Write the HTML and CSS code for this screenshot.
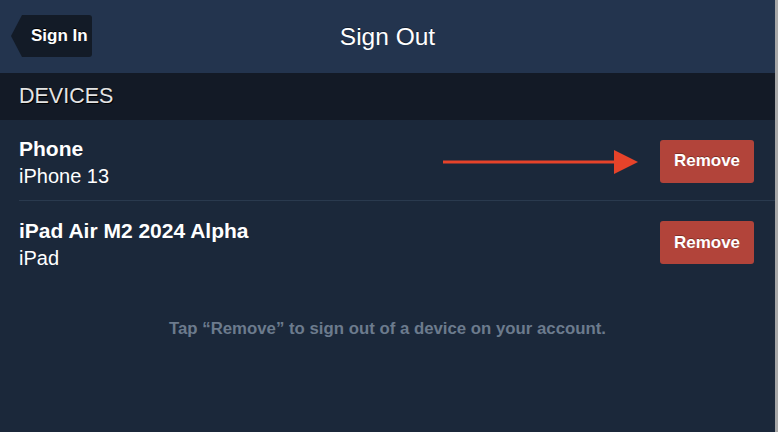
FILE: index.html
```html
<!DOCTYPE html>
<html lang="en">
<head>
    <meta charset="UTF-8">
    <meta name="viewport" content="width=device-width, initial-scale=1.0">
    <title>Sign Out</title>
    <link rel="stylesheet" href="styles.css">
</head>
<body>
    <div class="screen">
        <header class="nav-bar">
            <button class="back-btn">Sign In</button>
            <h1>Sign Out</h1>
        </header>

        <div class="section-header">DEVICES</div>

        <ul class="device-list">
            <li class="device-row">
                <div class="device-info">
                    <div class="device-name">Phone</div>
                    <div class="device-model">iPhone 13</div>
                </div>
                <button class="remove-btn">Remove</button>
                <!-- annotation arrow -->
                <svg class="callout-arrow" width="196" height="26" viewBox="0 0 196 26">
                    <line x1="0" y1="13" x2="174" y2="13" stroke="#e6432a" stroke-width="3"/>
                    <polygon points="171,1 195,13 171,25" fill="#e6432a"/>
                </svg>
            </li>
            <li class="device-row">
                <div class="device-info">
                    <div class="device-name">iPad Air M2 2024 Alpha</div>
                    <div class="device-model">iPad</div>
                </div>
                <button class="remove-btn">Remove</button>
            </li>
        </ul>

        <p class="hint">Tap “Remove” to sign out of a device on your account.</p>
    </div>
</body>
</html>
```

FILE: styles.css
```css
* {
    box-sizing: border-box;
}

body {
    margin: 0;
    font-family: "Liberation Sans", Arial, sans-serif;
    background: #1b283a;
    color: white;
    height: 432px;
    overflow: hidden;
}

.screen {
    width: 778px;
    height: 432px;
    border-right: 3px solid #a8a8a8;
    background: #1b283a;
}

/* Navigation bar */
.nav-bar {
    position: relative;
    height: 73px;
    background: #23344e;
    display: flex;
    align-items: center;
    justify-content: center;
}

.nav-bar h1 {
    margin: 0;
    font-size: 24.5px;
    font-weight: normal;
    text-shadow: 0 -1px 0 rgba(0, 0, 0, 0.4);
}

.back-btn {
    position: absolute;
    left: 22px;
    top: 15px;
    height: 42px;
    width: 70px;
    padding: 0 0 0 9px;
    border: none;
    border-radius: 0 3px 3px 0;
    background: #131b27;
    color: white;
    font-family: inherit;
    font-size: 17px;
    font-weight: bold;
    text-shadow: 0 -1px 0 #000;
    text-align: left;
}

.back-btn::before {
    content: '';
    position: absolute;
    left: -11px;
    top: 0;
    border-top: 21px solid transparent;
    border-bottom: 21px solid transparent;
    border-right: 11px solid #131b27;
}

/* Section */
.section-header {
    height: 47px;
    background: #131a26;
    padding: 0 19px 1px;
    display: flex;
    align-items: center;
    font-size: 21.5px;
    color: #e4e4e4;
    text-shadow: 1px 1px 0 #000;
}

.device-list {
    list-style: none;
    margin: 0;
    padding: 0 0 0 19px;
}

.device-row {
    position: relative;
    height: 81px;
    display: flex;
    align-items: center;
    justify-content: space-between;
    padding-right: 21px;
    padding-top: 2px;
    border-bottom: 1px solid #2a3a4e;
}

.device-row:last-child {
    border-bottom: none;
}

.device-info {
    padding-top: 3px;
}

.device-name {
    font-size: 21px;
    font-weight: bold;
    line-height: 26px;
}

.device-model {
    font-size: 20px;
    line-height: 26px;
    margin-top: 1px;
}

.remove-btn {
    width: 94px;
    height: 43px;
    border: none;
    border-radius: 3px;
    background: #b2443a;
    color: white;
    font-family: inherit;
    font-size: 17px;
    font-weight: bold;
    text-shadow: 0 -1px 0 rgba(0, 0, 0, 0.3);
}

.callout-arrow {
    position: absolute;
    left: 424px;
    top: 29px;
}

.hint {
    margin: 37px 0 0;
    text-align: center;
    font-size: 16.8px;
    font-weight: bold;
    color: #6c7b8d;
}
```
